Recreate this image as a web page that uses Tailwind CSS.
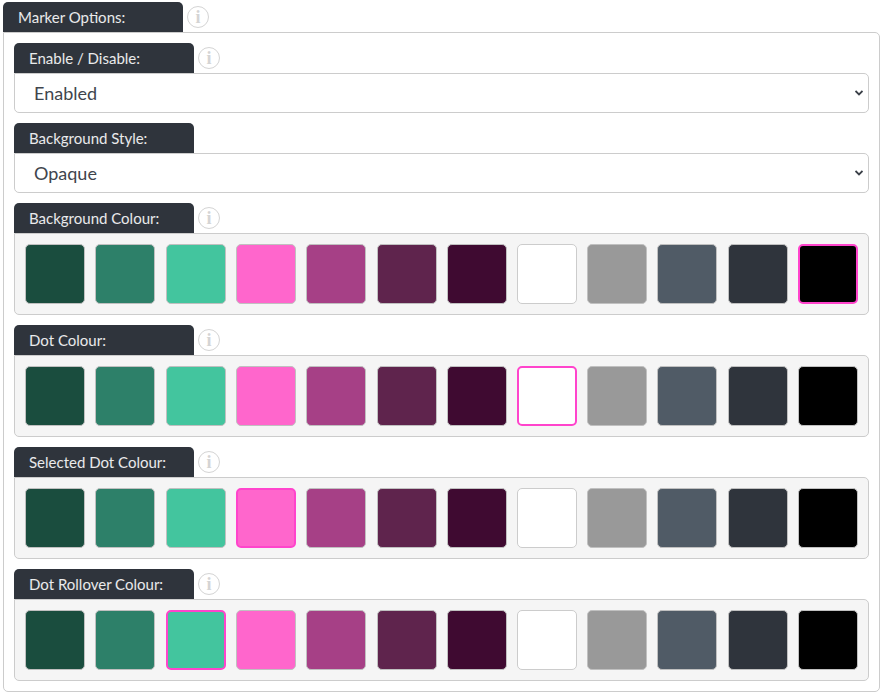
<!DOCTYPE html>
<html lang="en">
  <head>
    <meta charset="UTF-8" />
    <title>Marker Options</title>
    <script src="https://cdn.jsdelivr.net/npm/@tailwindcss/browser@4"></script>
  </head>
  <body class="bg-white font-['Lato',sans-serif] text-[#40454d] pt-[2px] pl-[3px] w-[884px] h-[696px] overflow-hidden">

    <!-- Marker options -->
    <div class="flex items-center">
      <div class="w-[180px] h-[30px] bg-[#2f343c] text-white/90 text-[15px] leading-[30px] pl-[15px] rounded-t-[5px]">Marker Options:</div>
      <span class="ml-[4px] w-[22px] h-[22px] rounded-full border-[1.5px] border-[#d4d4d4] flex items-center justify-center font-['Liberation_Serif',serif] font-bold text-[#d4d4d4] text-[18px] leading-none">i</span>
    </div>
    <div class="w-[877px] h-[660px] border border-[#cccccc] rounded-b-[5px] rounded-tr-[5px] pt-[10px] pl-[10px] pr-[10px] flex flex-col gap-[10px]">

      <div>
        <div class="flex items-center">
          <div class="w-[180px] h-[30px] bg-[#2f343c] text-white/90 text-[15px] leading-[30px] pl-[15px] rounded-t-[5px]">Enable / Disable:</div>
          <span class="ml-[4px] w-[22px] h-[22px] rounded-full border-[1.5px] border-[#d4d4d4] flex items-center justify-center font-['Liberation_Serif',serif] font-bold text-[#d4d4d4] text-[18px] leading-none">i</span>
        </div>
        <div class="relative w-[855px]">
          <select class="block w-full h-10 appearance-none bg-white border border-[#cccccc] rounded-b-[5px] rounded-tr-[5px] pl-[19px] text-[18px] text-[#40454d]">
            <option>Enabled</option>
          </select>
          <svg class="absolute right-[6px] top-[17px] w-[8px] h-[6px] pointer-events-none" viewBox="0 0 8 6"><path d="M.5 1l3.5 3.5L7.5 1" fill="none" stroke="#3a3f47" stroke-width="1.8"/></svg>
        </div>
      </div>

      <div>
        <div class="w-[180px] h-[30px] bg-[#2f343c] text-white/90 text-[15px] leading-[30px] pl-[15px] rounded-t-[5px]">Background Style:</div>
        <div class="relative w-[855px]">
          <select class="block w-full h-10 appearance-none bg-white border border-[#cccccc] rounded-b-[5px] rounded-tr-[5px] pl-[19px] text-[18px] text-[#40454d]">
            <option>Opaque</option>
          </select>
          <svg class="absolute right-[6px] top-[17px] w-[8px] h-[6px] pointer-events-none" viewBox="0 0 8 6"><path d="M.5 1l3.5 3.5L7.5 1" fill="none" stroke="#3a3f47" stroke-width="1.8"/></svg>
        </div>
      </div>

      <div>
        <div class="flex items-center">
          <div class="w-[180px] h-[30px] bg-[#2f343c] text-white/90 text-[15px] leading-[30px] pl-[15px] rounded-t-[5px]">Background Colour:</div>
          <span class="ml-[4px] w-[22px] h-[22px] rounded-full border-[1.5px] border-[#d4d4d4] flex items-center justify-center font-['Liberation_Serif',serif] font-bold text-[#d4d4d4] text-[18px] leading-none">i</span>
        </div>
        <div class="w-[855px] h-[82px] bg-[#f5f5f5] border border-[#cccccc] rounded-b-[5px] rounded-tr-[5px] p-[10px] flex gap-[10px]">
          <div class="w-[60px] h-[60px] rounded-[5px] border border-[#c0c0c0] bg-[#1a4d3e]"></div>
          <div class="w-[60px] h-[60px] rounded-[5px] border border-[#c0c0c0] bg-[#2d8069]"></div>
          <div class="ml-px w-[60px] h-[60px] rounded-[5px] border border-[#c0c0c0] bg-[#43c59e]"></div>
          <div class="w-[60px] h-[60px] rounded-[5px] border border-[#c0c0c0] bg-[#ff66cc]"></div>
          <div class="w-[60px] h-[60px] rounded-[5px] border border-[#c0c0c0] bg-[#a64086]"></div>
          <div class="ml-px w-[60px] h-[60px] rounded-[5px] border border-[#c0c0c0] bg-[#5f244d]"></div>
          <div class="w-[60px] h-[60px] rounded-[5px] border border-[#c0c0c0] bg-[#3f0a31]"></div>
          <div class="w-[60px] h-[60px] rounded-[5px] border border-[#cccccc] bg-white"></div>
          <div class="w-[60px] h-[60px] rounded-[5px] border border-[#c0c0c0] bg-[#999999]"></div>
          <div class="w-[60px] h-[60px] rounded-[5px] border border-[#c0c0c0] bg-[#505b66]"></div>
          <div class="ml-px w-[60px] h-[60px] rounded-[5px] border border-[#c0c0c0] bg-[#2f343c]"></div>
          <div class="w-[60px] h-[60px] rounded-[5px] border-2 border-[#ff44cc] bg-black"></div>
        </div>
      </div>

      <div>
        <div class="flex items-center">
          <div class="w-[180px] h-[30px] bg-[#2f343c] text-white/90 text-[15px] leading-[30px] pl-[15px] rounded-t-[5px]">Dot Colour:</div>
          <span class="ml-[4px] w-[22px] h-[22px] rounded-full border-[1.5px] border-[#d4d4d4] flex items-center justify-center font-['Liberation_Serif',serif] font-bold text-[#d4d4d4] text-[18px] leading-none">i</span>
        </div>
        <div class="w-[855px] h-[82px] bg-[#f5f5f5] border border-[#cccccc] rounded-b-[5px] rounded-tr-[5px] p-[10px] flex gap-[10px]">
          <div class="w-[60px] h-[60px] rounded-[5px] border border-[#c0c0c0] bg-[#1a4d3e]"></div>
          <div class="w-[60px] h-[60px] rounded-[5px] border border-[#c0c0c0] bg-[#2d8069]"></div>
          <div class="ml-px w-[60px] h-[60px] rounded-[5px] border border-[#c0c0c0] bg-[#43c59e]"></div>
          <div class="w-[60px] h-[60px] rounded-[5px] border border-[#c0c0c0] bg-[#ff66cc]"></div>
          <div class="w-[60px] h-[60px] rounded-[5px] border border-[#c0c0c0] bg-[#a64086]"></div>
          <div class="ml-px w-[60px] h-[60px] rounded-[5px] border border-[#c0c0c0] bg-[#5f244d]"></div>
          <div class="w-[60px] h-[60px] rounded-[5px] border border-[#c0c0c0] bg-[#3f0a31]"></div>
          <div class="w-[60px] h-[60px] rounded-[5px] border-2 border-[#ff44cc] bg-white"></div>
          <div class="w-[60px] h-[60px] rounded-[5px] border border-[#c0c0c0] bg-[#999999]"></div>
          <div class="w-[60px] h-[60px] rounded-[5px] border border-[#c0c0c0] bg-[#505b66]"></div>
          <div class="ml-px w-[60px] h-[60px] rounded-[5px] border border-[#c0c0c0] bg-[#2f343c]"></div>
          <div class="w-[60px] h-[60px] rounded-[5px] border border-[#c0c0c0] bg-black"></div>
        </div>
      </div>

      <div>
        <div class="flex items-center">
          <div class="w-[180px] h-[30px] bg-[#2f343c] text-white/90 text-[15px] leading-[30px] pl-[15px] rounded-t-[5px]">Selected Dot Colour:</div>
          <span class="ml-[4px] w-[22px] h-[22px] rounded-full border-[1.5px] border-[#d4d4d4] flex items-center justify-center font-['Liberation_Serif',serif] font-bold text-[#d4d4d4] text-[18px] leading-none">i</span>
        </div>
        <div class="w-[855px] h-[82px] bg-[#f5f5f5] border border-[#cccccc] rounded-b-[5px] rounded-tr-[5px] p-[10px] flex gap-[10px]">
          <div class="w-[60px] h-[60px] rounded-[5px] border border-[#c0c0c0] bg-[#1a4d3e]"></div>
          <div class="w-[60px] h-[60px] rounded-[5px] border border-[#c0c0c0] bg-[#2d8069]"></div>
          <div class="ml-px w-[60px] h-[60px] rounded-[5px] border border-[#c0c0c0] bg-[#43c59e]"></div>
          <div class="w-[60px] h-[60px] rounded-[5px] border-2 border-[#ff44cc] bg-[#ff66cc]"></div>
          <div class="w-[60px] h-[60px] rounded-[5px] border border-[#c0c0c0] bg-[#a64086]"></div>
          <div class="ml-px w-[60px] h-[60px] rounded-[5px] border border-[#c0c0c0] bg-[#5f244d]"></div>
          <div class="w-[60px] h-[60px] rounded-[5px] border border-[#c0c0c0] bg-[#3f0a31]"></div>
          <div class="w-[60px] h-[60px] rounded-[5px] border border-[#cccccc] bg-white"></div>
          <div class="w-[60px] h-[60px] rounded-[5px] border border-[#c0c0c0] bg-[#999999]"></div>
          <div class="w-[60px] h-[60px] rounded-[5px] border border-[#c0c0c0] bg-[#505b66]"></div>
          <div class="ml-px w-[60px] h-[60px] rounded-[5px] border border-[#c0c0c0] bg-[#2f343c]"></div>
          <div class="w-[60px] h-[60px] rounded-[5px] border border-[#c0c0c0] bg-black"></div>
        </div>
      </div>

      <div>
        <div class="flex items-center">
          <div class="w-[180px] h-[30px] bg-[#2f343c] text-white/90 text-[15px] leading-[30px] pl-[15px] rounded-t-[5px]">Dot Rollover Colour:</div>
          <span class="ml-[4px] w-[22px] h-[22px] rounded-full border-[1.5px] border-[#d4d4d4] flex items-center justify-center font-['Liberation_Serif',serif] font-bold text-[#d4d4d4] text-[18px] leading-none">i</span>
        </div>
        <div class="w-[855px] h-[82px] bg-[#f5f5f5] border border-[#cccccc] rounded-b-[5px] rounded-tr-[5px] p-[10px] flex gap-[10px]">
          <div class="w-[60px] h-[60px] rounded-[5px] border border-[#c0c0c0] bg-[#1a4d3e]"></div>
          <div class="w-[60px] h-[60px] rounded-[5px] border border-[#c0c0c0] bg-[#2d8069]"></div>
          <div class="ml-px w-[60px] h-[60px] rounded-[5px] border-2 border-[#ff44cc] bg-[#43c59e]"></div>
          <div class="w-[60px] h-[60px] rounded-[5px] border border-[#c0c0c0] bg-[#ff66cc]"></div>
          <div class="w-[60px] h-[60px] rounded-[5px] border border-[#c0c0c0] bg-[#a64086]"></div>
          <div class="ml-px w-[60px] h-[60px] rounded-[5px] border border-[#c0c0c0] bg-[#5f244d]"></div>
          <div class="w-[60px] h-[60px] rounded-[5px] border border-[#c0c0c0] bg-[#3f0a31]"></div>
          <div class="w-[60px] h-[60px] rounded-[5px] border border-[#cccccc] bg-white"></div>
          <div class="w-[60px] h-[60px] rounded-[5px] border border-[#c0c0c0] bg-[#999999]"></div>
          <div class="w-[60px] h-[60px] rounded-[5px] border border-[#c0c0c0] bg-[#505b66]"></div>
          <div class="ml-px w-[60px] h-[60px] rounded-[5px] border border-[#c0c0c0] bg-[#2f343c]"></div>
          <div class="w-[60px] h-[60px] rounded-[5px] border border-[#c0c0c0] bg-black"></div>
        </div>
      </div>

    </div>
  </body>
</html>
